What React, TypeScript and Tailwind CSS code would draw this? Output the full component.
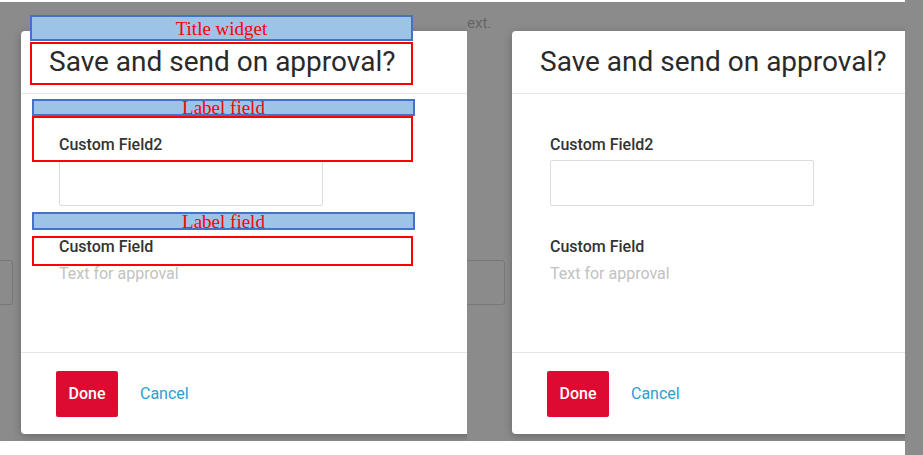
const roboto = { fontFamily: "Roboto, 'Liberation Sans', sans-serif" };

function ApprovalDialog() {
  return (
    <div
      className="w-[460px] h-[403px] shrink-0 bg-white rounded-[4px] shadow-[0_2px_8px_rgba(0,0,0,0.25)] flex flex-col"
      style={roboto}
    >
      {/* Header */}
      <div className="h-[63px] border-b border-[#e6e6e6] flex items-center pl-[28px]">
        <h2 className="text-[28px] text-[#2a2a2a] leading-none">Save and send on approval?</h2>
      </div>

      {/* Body */}
      <div className="flex-1 pl-[38px] pt-[42px] flex flex-col">
        <label className="text-[16px] font-medium text-[#333] leading-[18px]">Custom Field2</label>
        <div className="mt-[6px] w-[264px] h-[46px] border border-[#dcdcdc] rounded-[2px]" />
        <label className="mt-[32px] text-[16px] font-medium text-[#333] leading-[18px]">Custom Field</label>
        <span className="mt-[9px] text-[16px] text-[#c2c2c2] leading-[18px]">Text for approval</span>
      </div>

      {/* Footer */}
      <div className="h-[82px] border-t border-[#e6e6e6] flex items-center pl-[35px] pt-[1px] gap-[22px]">
        <button className="w-[62px] h-[46px] bg-[#dd0a31] rounded-[2px] text-white text-[16px] font-medium">
          Done
        </button>
        <button className="text-[16px] text-[#2b9ed3]">Cancel</button>
      </div>
    </div>
  );
}

function Note({ label, className }: { label: string; className: string }) {
  return (
    <div
      className={`absolute left-[30px] w-[383px] bg-[#9dc3e6] border-2 border-[#4472c4] flex items-center justify-center overflow-visible ${className}`}
    >
      <span
        className="text-[19px] text-[#ff0000] leading-none whitespace-nowrap"
        style={{ fontFamily: "'Liberation Serif', 'DejaVu Serif', serif" }}
      >
        {label}
      </span>
    </div>
  );
}

function Frame({ className }: { className: string }) {
  return <div className={`absolute border-2 border-[#ff0000] ${className}`} />;
}

export default function App() {
  return (
    <div className="w-[923px] h-[455px] bg-white flex items-start overflow-hidden">
      {/* Left screenshot (annotated) */}
      <div className="relative w-[467px] h-[439px] mt-[2px] bg-[#8b8b8b] overflow-hidden pl-[21px] pt-[29px] flex shrink-0">
        <div className="absolute left-[-40px] top-[258px] w-[53px] h-[45px] border border-[#777] rounded-[3px]" />
        <ApprovalDialog />

        <Note label="Title widget" className="top-[13px] h-[26px]" />
        <Frame className="left-[30px] top-[40px] w-[383px] h-[43px]" />
        <Note label="Label field" className="left-[32px] w-[381px] top-[97px] h-[17px]" />
        <Frame className="left-[32px] top-[114px] w-[381px] h-[46px]" />
        <Note label="Label field" className="left-[32px] w-[381px] top-[210px] h-[18px]" />
        <Frame className="left-[32px] top-[234px] w-[381px] h-[30px]" />
      </div>

      {/* Right screenshot (clean) */}
      <div className="relative w-[438px] h-[439px] mt-[2px] bg-[#8b8b8b] overflow-hidden pl-[45px] pt-[29px] flex shrink-0">
        <span className="absolute left-0 top-[14px] text-[15px] text-[#666] leading-none" style={roboto}>
          ext.
        </span>
        <div className="absolute left-[-20px] top-[258px] w-[58px] h-[45px] border border-[#777] rounded-[3px]" />
        <ApprovalDialog />
      </div>

      {/* Right edge strip */}
      <div className="w-[18px] h-[455px] bg-[#8b8b8b] shrink-0" />
    </div>
  );
}
